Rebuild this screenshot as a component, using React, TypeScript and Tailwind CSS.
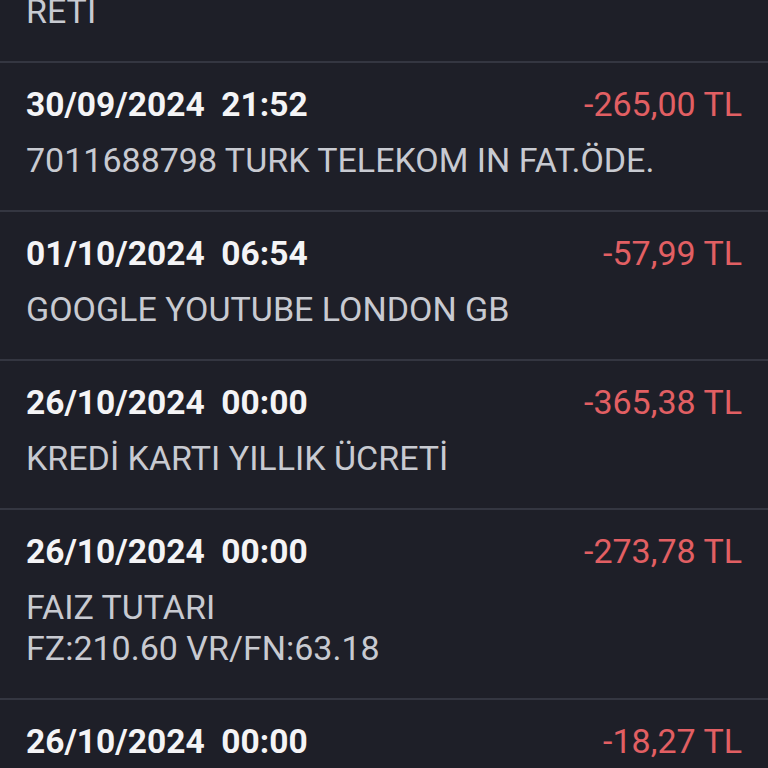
const ROWS = [
  { date: "30/09/2024", time: "21:52", amount: "-265,00 TL", lines: ["7011688798 TURK TELEKOM IN FAT.ÖDE."] },
  { date: "01/10/2024", time: "06:54", amount: "-57,99 TL", lines: ["GOOGLE YOUTUBE LONDON GB"] },
  { date: "26/10/2024", time: "00:00", amount: "-365,38 TL", lines: ["KREDİ KARTI YILLIK ÜCRETİ"] },
  { date: "26/10/2024", time: "00:00", amount: "-273,78 TL", lines: ["FAIZ TUTARI", "FZ:210.60 VR/FN:63.18"] },
  { date: "26/10/2024", time: "00:00", amount: "-18,27 TL", lines: ["BSMV TUTARI"] },
];

export default function App() {
  return (
    <div
      className="h-[768px] w-[768px] overflow-hidden bg-[#1e1f28] text-[34px] leading-[41px]"
      style={{ fontFamily: "Roboto, 'Noto Sans', sans-serif" }}
    >
      <div className="-mt-[9px] px-[26px] pb-[29px] text-[#c8cad1]">RETI</div>
      {ROWS.map((r, i) => (
        <div key={i} className="border-t-2 border-[#343641] px-[26px] pt-[21px] pb-[29px]">
          <div className="flex items-baseline justify-between">
            <span className="text-[33.5px] font-bold text-[#f4f4f6]">
              {r.date}&nbsp;&nbsp;{r.time}
            </span>
            <span className="text-[#e25f63]">{r.amount}</span>
          </div>
          <div className="mt-[15px] text-[#c8cad1]">
            {r.lines.map((l) => (
              <div key={l}>{l}</div>
            ))}
          </div>
        </div>
      ))}
    </div>
  );
}
